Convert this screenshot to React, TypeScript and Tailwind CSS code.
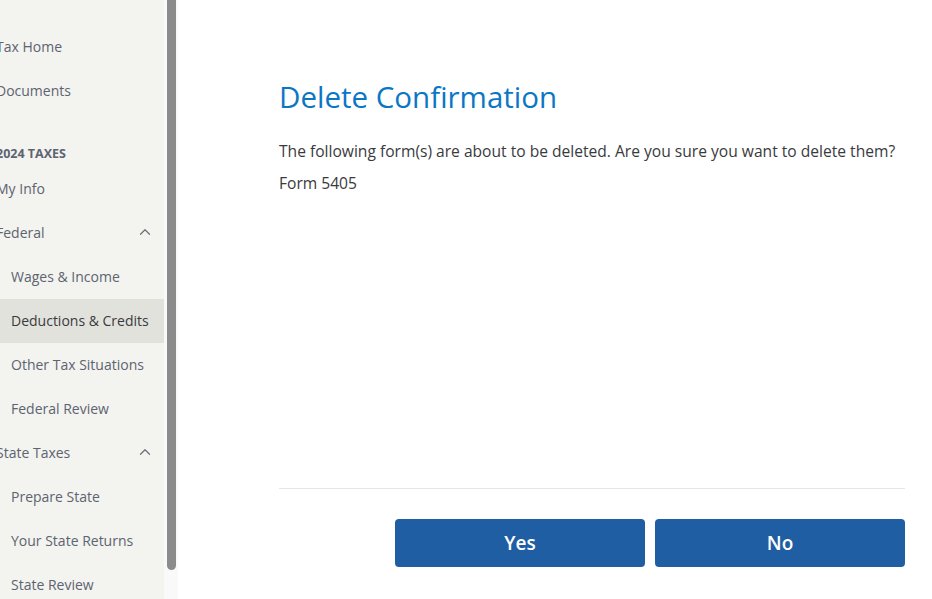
import { ChevronUp } from "lucide-react";

type NavItem = { label: string; sub?: boolean; active?: boolean; expandable?: boolean };

const topItems: NavItem[] = [{ label: "Tax Home" }, { label: "Documents" }];

const taxItems: NavItem[] = [
  { label: "My Info" },
  { label: "Federal", expandable: true },
  { label: "Wages & Income", sub: true },
  { label: "Deductions & Credits", sub: true, active: true },
  { label: "Other Tax Situations", sub: true },
  { label: "Federal Review", sub: true },
  { label: "State Taxes", expandable: true },
  { label: "Prepare State", sub: true },
  { label: "Your State Returns", sub: true },
  { label: "State Review", sub: true },
];

function NavRow({ item }: { item: NavItem }) {
  return (
    <div
      className={`flex h-[44px] shrink-0 items-center justify-between pb-[2px] pr-[10px] text-[14px] ${
        item.active ? "bg-[#e2e2dc] text-[#393a3d]" : "text-[#5d6370]"
      } ${item.sub ? "pl-[11px]" : "pl-0"}`}
    >
      <span className={item.sub ? "" : "-ml-[4px]"}>{item.label}</span>
      {item.expandable && <ChevronUp size={18} strokeWidth={1.6} className="text-[#6b707a]" />}
    </div>
  );
}

export default function App() {
  return (
    <div
      className="flex h-[599px] w-[932px] overflow-hidden bg-white"
      style={{ fontFamily: "'Open Sans', 'Noto Sans', sans-serif" }}
    >
      <aside className="flex w-[164px] shrink-0 flex-col bg-[#f3f3ef] pt-[25px]">
        {topItems.map((item) => (
          <NavRow key={item.label} item={item} />
        ))}
        <div className="mt-[8px] h-px bg-[#b8bdbd]" />
        <div className="-ml-[4px] shrink-0 pb-[5px] pt-[25px] text-[12.5px] font-bold leading-[16px] text-[#5d6370]">
          2024 TAXES
        </div>
        {taxItems.map((item) => (
          <NavRow key={item.label} item={item} />
        ))}
      </aside>
      <div className="flex w-[14px] shrink-0 justify-center bg-[#f9f9f9] pl-[1px]">
        <div className="h-[570px] w-[9px] rounded-b-[5px] bg-[#8b8b8b]" />
      </div>
      <main className="flex flex-1 flex-col pl-[101px] pr-[27px]">
        <h1 className="mt-[77px] text-[29.5px] leading-[40px] text-[#0a77c4]">Delete Confirmation</h1>
        <p className="mt-[24px] text-[15.6px] leading-[20px] text-[#393a3d]">
          The following form(s) are about to be deleted. Are you sure you want to delete them?
        </p>
        <p className="mt-[12px] text-[15.6px] leading-[20px] text-[#393a3d]">Form 5405</p>
        <div className="mt-[295px] h-px bg-[#e6e6e6]" />
        <div className="mt-[30px] flex justify-end gap-[10px]">
          <button
            type="button"
            className="h-[48px] w-[250px] rounded-[4px] bg-[#205ea4] text-[19px] font-semibold text-white"
          >
            Yes
          </button>
          <button
            type="button"
            className="h-[48px] w-[250px] rounded-[4px] bg-[#205ea4] text-[19px] font-semibold text-white"
          >
            No
          </button>
        </div>
      </main>
    </div>
  );
}
